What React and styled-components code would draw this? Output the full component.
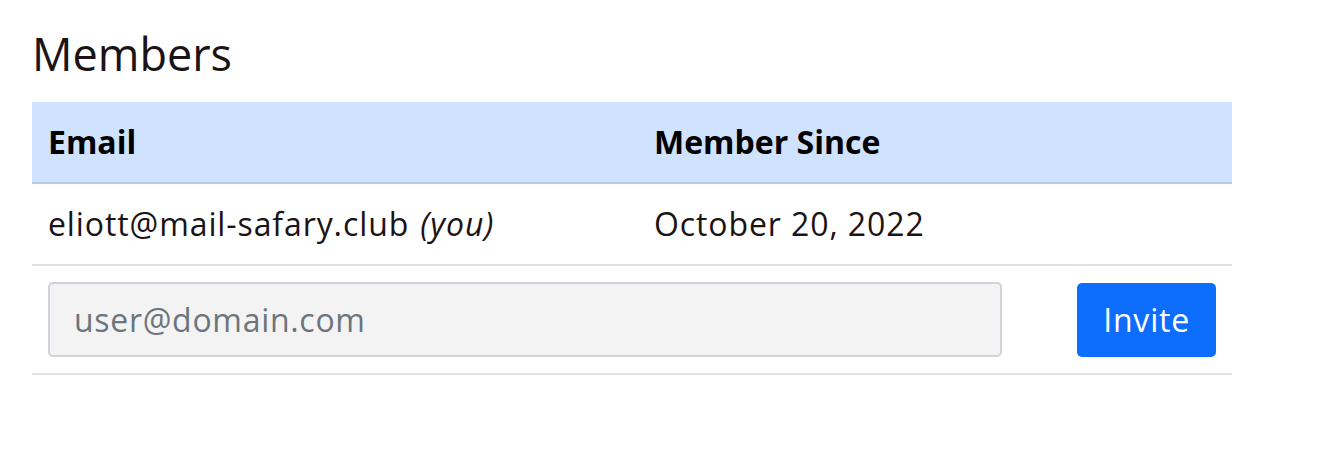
import React from "react";
import styled, { createGlobalStyle } from "styled-components";

const Global = createGlobalStyle`
  html, body { margin: 0; padding: 0; background: #fff; }
  body { font-family: "Open Sans", "Liberation Sans", sans-serif; color: #212529; }
  * { box-sizing: border-box; }
`;

const Page = styled.div`
  padding: 27px 32px 0 32px;
  width: 1264px;
`;

const Title = styled.h2`
  margin: 0 0 21px 0;
  font-family: "Open Sans", sans-serif;
  font-weight: 400;
  font-size: 45px;
  line-height: 1.2;
  color: #1b1314;
`;

const Table = styled.table`
  width: 1200px;
  border-collapse: collapse;
  table-layout: fixed;
  font-size: 32px;
  line-height: 1.5;
`;

const HeadCell = styled.th`
  text-align: left;
  font-weight: 700;
  padding: 16px 16px;
  background: #cfe2ff;
  border-bottom: 2px solid #b9cbe5;
  color: #000;
  letter-spacing: 0px;
`;

const Row = styled.tr`
  border-bottom: 2px solid #dee2e6;
`;

const Cell = styled.td`
  padding: 16px;
  text-align: ${(p) => (p.$right ? "right" : "left")};
  vertical-align: middle;
  color: #1b1314;
  letter-spacing: 0.9px;
`;

const You = styled.em`
  font-style: italic;
  margin-left: 2px;
`;

const Input = styled.input`
  display: block;
  width: 100%;
  height: 75px;
  padding: 12px 24px;
  font-family: "Open Sans", sans-serif;
  font-size: 32px;
  line-height: 1.5;
  letter-spacing: 0.7px;
  color: #212529;
  background: #f3f3f3;
  border: 2px solid #ced4da;
  border-radius: 5px;
  outline: none;
  &::placeholder { color: #6c757d; }
`;

const Button = styled.button`
  display: inline-block;
  height: 74px;
  padding: 12px 26px;
  font-family: "Open Sans", sans-serif;
  font-size: 32px;
  line-height: 1.5;
  letter-spacing: 0.8px;
  color: #fff;
  background: #0d6efd;
  border: none;
  border-radius: 5px;
  cursor: pointer;
`;

export default function App() {
  return (
    <>
      <Global />
      <Page>
        <Title>Members</Title>
        <Table>
          <colgroup>
            <col style={{ width: 606 }} />
            <col style={{ width: 380 }} />
            <col style={{ width: 214 }} />
          </colgroup>
          <thead>
            <tr>
              <HeadCell>Email</HeadCell>
              <HeadCell>Member Since</HeadCell>
              <HeadCell />
            </tr>
          </thead>
          <tbody>
            <Row>
              <Cell>
                eliott@mail-safary.club <You>(you)</You>
              </Cell>
              <Cell>October 20, 2022</Cell>
              <Cell />
            </Row>
            <Row>
              <Cell colSpan={2}>
                <Input placeholder="user@domain.com" />
              </Cell>
              <Cell $right>
                <Button>Invite</Button>
              </Cell>
            </Row>
          </tbody>
        </Table>
      </Page>
    </>
  );
}
